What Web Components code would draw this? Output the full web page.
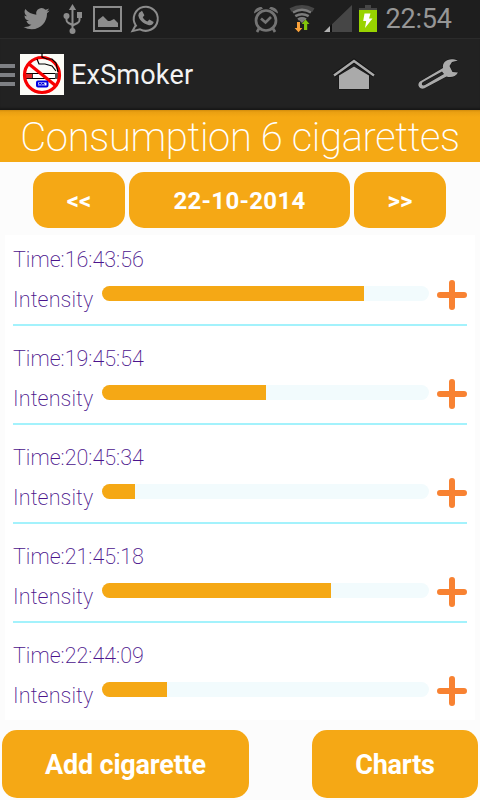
<!DOCTYPE html>
<html lang="en"><head><meta charset="utf-8"><title>ExSmoker</title>
<style>body{margin:0;font-family:Roboto,"Liberation Sans",sans-serif;background:#fcfcfc}</style></head>
<body>
<ex-app></ex-app>
<script>
function define(name, html) {
  customElements.define(name, class extends HTMLElement {
    constructor() {
      super();
      this.attachShadow({mode: 'open'}).innerHTML = html;
    }
  });
}

define('status-bar', `<style>
:host{display:flex;box-sizing:border-box;height:39px;background:#1e1e1e;border-bottom:1px solid #2b2b2b;overflow:hidden}
svg{width:380px;height:38px;flex:none;display:block}
span{color:#969696;font-size:27px;line-height:38px;letter-spacing:-.2px;margin-left:5.5px;white-space:nowrap}
</style>
<svg viewBox="0 0 380 38">
<g fill="#8c8c8c">
<path transform="translate(23.5 5.6) scale(1.09)" d="M23.95 4.57a10 10 0 0 1-2.82.78 4.96 4.96 0 0 0 2.16-2.73c-.95.56-2 .97-3.13 1.19a4.92 4.92 0 0 0-8.38 4.48C7.69 8.1 4.07 6.13 1.64 3.16a4.9 4.9 0 0 0 1.52 6.57 4.9 4.9 0 0 1-2.23-.61v.06a4.92 4.92 0 0 0 3.95 4.83 5 5 0 0 1-2.21.08 4.94 4.94 0 0 0 4.6 3.42A9.87 9.87 0 0 1 0 19.54a14 14 0 0 0 7.55 2.21c9.05 0 14-7.5 14-13.99 0-.21 0-.42-.02-.63a9.94 9.94 0 0 0 2.42-2.56z"/>
<path d="M72.5 4l3.6 6h-7.2z"/><circle cx="66.5" cy="16" r="3"/><path d="M77 12h5v6h-5z"/><circle cx="72.5" cy="31" r="3"/>
</g>
<g fill="none" stroke="#8c8c8c" stroke-width="2">
<path d="M72.5 9v21M66.5 16v4q0 2 2 3l4 2M79.5 17v3q0 2-2 3l-5 2.5"/>
<path d="M94 7h27v24H94z"/>
<path d="M136.5 26.5l-.8-1.2a12 12 0 1 1 4.300 4l-7.500 1.800 3.200-5.800"/>
</g>
<path fill="#8c8c8c" d="M98 27v-7l5-4 5 5h2l4-2 4 4v4zM139 13l3-2.2 2.4 4.4-1.6 2c1 2 2.5 3.4 4.6 4.3l2-2 4.3 2.6c-.8 3-3 3.5-5.5 2.9-5.3-1.4-9-5-9.9-9.4z"/>
<g fill="none" stroke="#747474" stroke-width="2.7"><circle cx="266" cy="20.5" r="10"/><path d="M261 18.500l4.500 4 5.500-5.500M259 28.500l-2 3.500M273 28.500l2 3.500"/></g>
<path fill="#747474" d="M254 13.500c0-4 3.500-6.500 7.500-6.500l1.500 1.500zM278 13.500c0-4-3.500-6.500-7.500-6.500l-1.500 1.500z"/>
<path fill="none" stroke="#464646" stroke-width="4" d="M290.500 10q11.500-6 23 0"/>
<path fill="none" stroke="#7c7c7c" stroke-width="2.600" d="M293 12.500q9-5.500 18 0M295.300 16.200q6.700-4 13.400 0M298 19.500q4-2.500 8 0"/>
<path fill="#7c7c7c" d="M299 20q3-2 6 0l-3 3z"/>
<path fill="#f9a13a" d="M297 22h3v6h2.400l-3.900 4.200-3.900-4.200h2.400z"/>
<path fill="#82c50a" d="M304 30h3.200v-6h2.300l-3.900-4.500-3.900 4.500h2.300z"/>
<path fill="#464646" d="M332 24.300L352 5v27h-20zM365 5h6v3h6v2h-18V8h6z"/>
<path fill="#b2b2b2" d="M324 32l6-6v6z"/><path fill="#101010" d="M330 26l2-2v8h-2z"/>
<path fill="#98d300" d="M359 10h18v22h-18z"/><path fill="#fff" d="M364.500 13.500h6l-1.500 5h3.500l-7.500 9.500 1.200-7h-3z"/>
</svg><span>22:54</span>`);

define('action-bar', `<style>
:host{display:flex;align-items:flex-start;height:71px;background:#222;box-shadow:inset 0 -3px 2px -1px #181818;color:#f3f3f3}
.menu{width:15px;flex:none;padding-top:25px;display:grid;gap:5px}
.menu i{height:4px;background:#7e8084}
svg{display:block;flex:none}
.logo{margin:14px 0 0 5px}
span{font-size:27px;line-height:72px;margin-left:7px;flex:1;white-space:nowrap;letter-spacing:.2px}
</style>
<div class="menu"><i></i><i></i><i></i></div>
<svg class="logo" width="44" height="42" viewBox="0 0 44 42">
<path fill="#fcfcf7" d="M0 1h44v41H0z"/>
<path fill="#fff" stroke="#000" d="M5.500 20.500h32v5h-32z"/><path fill="#dc2828" stroke="#000" stroke-width=".7" d="M5.500 20.500h7v5h-7z"/><path fill="#555" d="M35 20h4v6h-4z"/>
<circle cx="22" cy="22" r="17.500" fill="none" stroke="#f80000" stroke-width="3.200"/>
<path stroke="#f80000" stroke-width="3.200" d="M9 11l27 22"/>
<path fill="none" stroke="#000" stroke-width="1.200" d="M22 0v4l5 2h5l4 4 2 9M17 6l2 5h6l7 2 4 5"/>
<rect x="17" y="28.500" width="10.500" height="5" rx="1" fill="#fff" stroke="#0000e0" stroke-width="2"/><path fill="none" stroke="#0000d8" d="M19 32.500v-2h2v2M22 32.500v-2h2v2"/>
</svg>
<span>ExSmoker</span>
<svg width="150" height="71" viewBox="330 39 150 71"><g stroke="#111" stroke-width="1" paint-order="stroke" fill="#aaa">
<path d="M339 89V75.500L354 66.500l15 9V89z"/><path fill="none" stroke="#111" stroke-width="4.500" d="M334 75.500L354 61 374 75.500"/><path fill="none" stroke="#aaa" stroke-width="2.500" d="M334 75.500L354 61 374 75.500"/>
<path fill-rule="evenodd" d="M458 60.500l-6 1.500-2.500 4 3 6 5.500.5c-2 4-7 5.500-11.500 4L424 88.500c-5 1-7.500-4-4-7L443 68c-1-7 6-11 15-7.500zM442 71.500l-19 10.500c-2.500 2-.5 4.500 2 3l19-11z"/></g></svg>`);

define('page-title', `<style>
:host{display:block;height:52px;background:linear-gradient(#d28c0c,#eaa012 2px,#f5a914 7px);color:#fff;font-size:40px;font-weight:200;line-height:56px;text-align:center;white-space:nowrap;letter-spacing:-.35px}
</style><slot></slot>`);

define('fill-button', `<style>
:host{display:flex;align-items:center;justify-content:center;box-sizing:border-box;background:#f5a815;color:#fff;border-radius:15px;font-weight:700;white-space:nowrap}
</style><slot></slot>`);

customElements.define('smoke-entry', class extends HTMLElement {
  connectedCallback() {
    this.attachShadow({mode: 'open'}).innerHTML = `<style>
:host{display:block;box-sizing:border-box;height:99px;border-bottom:2px solid #a3f2fc;color:#4b148c;font-size:21.5px;font-weight:200}
.t{padding-top:19px;line-height:27px;height:27px;letter-spacing:0}
.r{display:grid;grid-template-columns:89px 327px 30px;justify-content:start;height:30px;margin-top:7px}
.l{line-height:40px;letter-spacing:.1px}
svg{margin-left:8px}
.bar{height:15px;margin-top:6px;border-radius:8px;background:#f2fbfd;overflow:hidden}
.bar i{display:block;height:100%;background:#f5a815}
</style><div class="t">Time:${this.getAttribute('time')}</div>
<div class="r"><span class="l">Intensity</span><div class="bar"><i style="width:${this.getAttribute('level')}%"></i></div>
<svg width="30" height="30"><path d="M15 3v24M3 15h24" stroke="#f88232" stroke-width="6" stroke-linecap="round"/></svg></div>`;
  }
});

define('ex-app', `<style>
:host{display:flex;flex-direction:column;height:800px;width:480px;overflow:hidden}
action-bar,status-bar,page-title{flex:none}
.nav{display:grid;grid-template-columns:92px 221px 92px;gap:4px;padding:10px 0 0 33px;height:56px;font-size:24px}
.nav .d{letter-spacing:.3px}
.list{margin:7px 5px 0;height:485px;overflow:hidden;background:#fff;padding:0 8px;box-sizing:border-box;flex:none}
.scroll{margin-top:-8px}
.foot{display:flex;justify-content:space-between;padding:10px 2px 2px;flex:1;font-size:27px;letter-spacing:-.2px}
.add{width:247px}.charts{width:166px}
.foot fill-button{padding-top:2px}.nav fill-button{padding-top:1px}
</style>
<status-bar></status-bar><action-bar></action-bar>
<page-title>Consumption 6 cigarettes</page-title>
<div class="nav"><fill-button>&lt;&lt;</fill-button><fill-button class="d">22-10-2014</fill-button><fill-button>&gt;&gt;</fill-button></div>
<div class="list"><div class="scroll">
<smoke-entry time="16:43:56" level="80"></smoke-entry><smoke-entry time="19:45:54" level="50"></smoke-entry><smoke-entry time="20:45:34" level="10"></smoke-entry><smoke-entry time="21:45:18" level="70"></smoke-entry><smoke-entry time="22:44:09" level="20"></smoke-entry>
</div></div>
<div class="foot"><fill-button class="add">Add cigarette</fill-button><fill-button class="charts">Charts</fill-button></div>`);
</script>
</body></html>
